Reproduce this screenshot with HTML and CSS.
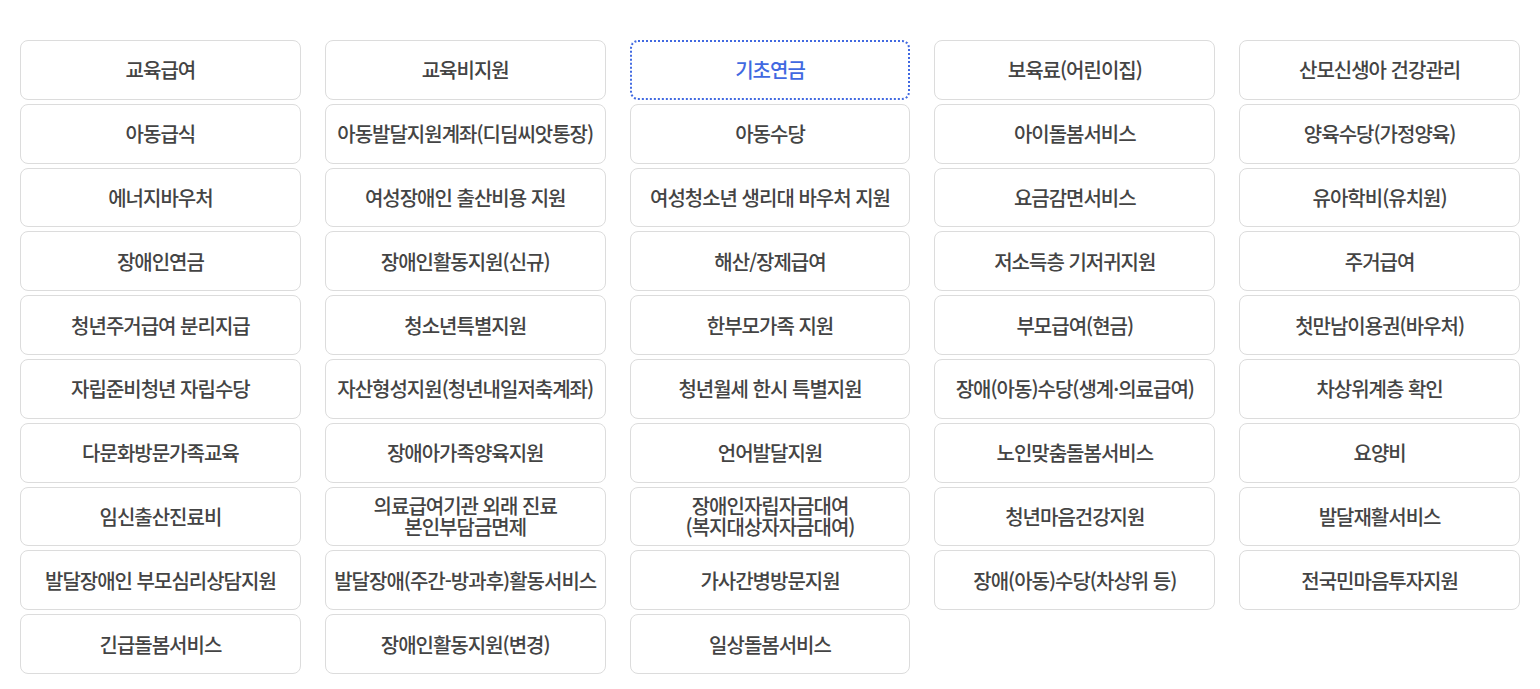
FILE: index.html
```html
<!DOCTYPE html>
<html lang="ko">
<head>
  <meta charset="UTF-8" />
  <meta name="viewport" content="width=device-width, initial-scale=1.0" />
  <title>복지서비스</title>
  <link rel="stylesheet" href="styles.css">
</head>
<body>
  <div class="service-list">
    <button class="svc">교육급여</button>
    <button class="svc">교육비지원</button>
    <button class="svc active">기초연금</button>
    <button class="svc">보육료(어린이집)</button>
    <button class="svc">산모신생아 건강관리</button>

    <button class="svc">아동급식</button>
    <button class="svc">아동발달지원계좌(디딤씨앗통장)</button>
    <button class="svc">아동수당</button>
    <button class="svc">아이돌봄서비스</button>
    <button class="svc">양육수당(가정양육)</button>

    <button class="svc">에너지바우처</button>
    <button class="svc">여성장애인 출산비용 지원</button>
    <button class="svc">여성청소년 생리대 바우처 지원</button>
    <button class="svc">요금감면서비스</button>
    <button class="svc">유아학비(유치원)</button>

    <button class="svc">장애인연금</button>
    <button class="svc">장애인활동지원(신규)</button>
    <button class="svc">해산/장제급여</button>
    <button class="svc">저소득층 기저귀지원</button>
    <button class="svc">주거급여</button>

    <button class="svc">청년주거급여 분리지급</button>
    <button class="svc">청소년특별지원</button>
    <button class="svc">한부모가족 지원</button>
    <button class="svc">부모급여(현금)</button>
    <button class="svc">첫만남이용권(바우처)</button>

    <button class="svc">자립준비청년 자립수당</button>
    <button class="svc">자산형성지원(청년내일저축계좌)</button>
    <button class="svc">청년월세 한시 특별지원</button>
    <button class="svc">장애(아동)수당(생계·의료급여)</button>
    <button class="svc">차상위계층 확인</button>

    <button class="svc">다문화방문가족교육</button>
    <button class="svc">장애아가족양육지원</button>
    <button class="svc">언어발달지원</button>
    <button class="svc">노인맞춤돌봄서비스</button>
    <button class="svc">요양비</button>

    <button class="svc">임신출산진료비</button>
    <button class="svc">의료급여기관 외래 진료<br>본인부담금면제</button>
    <button class="svc">장애인자립자금대여<br>(복지대상자자금대여)</button>
    <button class="svc">청년마음건강지원</button>
    <button class="svc">발달재활서비스</button>

    <button class="svc">발달장애인 부모심리상담지원</button>
    <button class="svc">발달장애(주간-방과후)활동서비스</button>
    <button class="svc">가사간병방문지원</button>
    <button class="svc">장애(아동)수당(차상위 등)</button>
    <button class="svc">전국민마음투자지원</button>

    <button class="svc">긴급돌봄서비스</button>
    <button class="svc">장애인활동지원(변경)</button>
    <button class="svc">일상돌봄서비스</button>
  </div>
</body>
</html>
```

FILE: styles.css
```css
:root {
  --text: #444;
  --border: #dcdcdc;
  --active: #4169e1;
}
body {
  margin: 0;
  padding: 40px 20px 15px;
  background: #fff;
  font-family: "Noto Sans CJK KR", "Noto Sans", sans-serif;
}
.service-list {
  display: grid;
  grid-template-columns: repeat(5, 1fr);
  grid-auto-rows: 59.8px;
  column-gap: 24px;
  row-gap: 4px;
}
.svc {
  background: #fff;
  border: 1px solid var(--border);
  border-radius: 8px;
  color: var(--text);
  font-family: inherit;
  font-size: 20px;
  font-weight: 500;
  letter-spacing: -1px;
  line-height: 21px;
  padding: 0 4px;
  cursor: pointer;
}
.svc:hover {
  border-color: #bbb;
}
.svc.active {
  border: 2px dotted var(--active);
  color: var(--active);
}
```
